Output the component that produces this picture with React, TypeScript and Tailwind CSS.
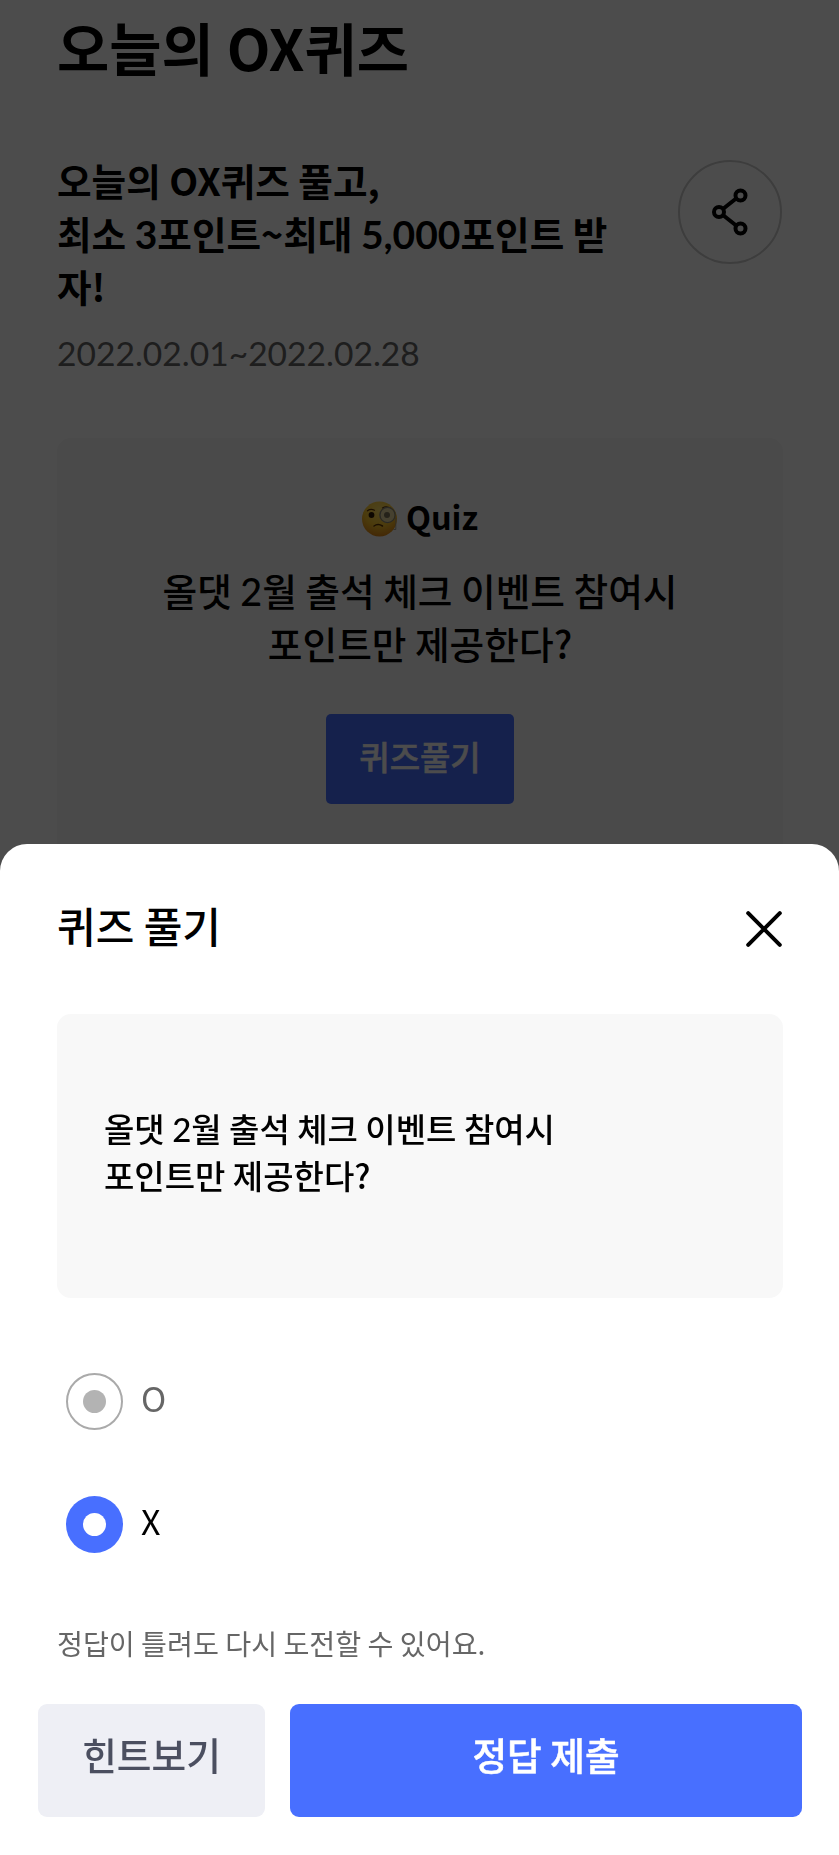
import { useState } from 'react'

const OPTIONS = ['O', 'X']

function ShareIcon() {
  return (
    <svg width="36" height="48" viewBox="0 0 36 48" fill="none" stroke="#000" strokeWidth="4">
      <path d="M11.5 20.5L23.5 11M11.5 27.5L23.5 37" />
      <circle cx="7" cy="24" r="5" />
      <circle cx="28.5" cy="7.5" r="5" />
      <circle cx="28.5" cy="40.5" r="5" />
    </svg>
  )
}

function MonocleFace() {
  return (
    <svg width="36" height="36" viewBox="0 0 36 36" fill="none">
      <defs>
        <radialGradient id="face" cx="0.5" cy="0.25" r="0.8">
          <stop offset="0" stopColor="#ffe168" />
          <stop offset="0.55" stopColor="#fbc52b" />
          <stop offset="1" stopColor="#dc7d12" />
        </radialGradient>
      </defs>
      <circle cx="17.5" cy="18" r="17.5" fill="url(#face)" />
      <path d="M5.5 9.8Q8.5 7.5 12.5 9.2" stroke="#5b3205" strokeWidth="1.2" strokeLinecap="round" />
      <path d="M20.5 7Q24.5 4.4 28.5 7.5" stroke="#5b3205" strokeWidth="1.2" strokeLinecap="round" />
      <ellipse cx="9.5" cy="14" rx="2.9" ry="3" fill="#2d1a04" />
      <circle cx="25.5" cy="14" r="7.6" fill="#e9d9a0" stroke="#8d8878" strokeWidth="1.4" />
      <circle cx="25" cy="14" r="3" fill="#7d7357" />
      <path d="M12 25Q16 22.2 20.5 25" stroke="#5b3205" strokeWidth="1.5" strokeLinecap="round" />
      <path d="M33.8 17V28.5H31.5" stroke="#a09a88" strokeWidth="0.9" />
    </svg>
  )
}

function CloseIcon() {
  return (
    <svg width="36" height="36" viewBox="0 0 36 36" stroke="#000" strokeWidth="4" strokeLinecap="round">
      <path d="M2.2 2.2L33.8 33.8M33.8 2.2L2.2 33.8" />
    </svg>
  )
}

function Radio({ checked }: { checked: boolean }) {
  return checked ? (
    <span className="flex size-[57px] items-center justify-center rounded-full bg-[#486fff]">
      <span className="size-[23px] rounded-full bg-white" />
    </span>
  ) : (
    <span className="flex size-[57px] items-center justify-center rounded-full border-2 border-[#aaa]">
      <span className="size-[23px] rounded-full bg-[#b3b3b3]" />
    </span>
  )
}

function QuizSheet() {
  const [answer, setAnswer] = useState('X')

  return (
    <section className="fixed inset-x-0 bottom-0 flex h-[1011px] flex-col rounded-t-[27px] bg-white pt-[53px]">
      <header className="flex h-[64px] items-center justify-between pr-[57px] pl-[57px]">
        <h2 className="pb-[8px] text-[42px] leading-[64px] font-medium">퀴즈 풀기</h2>
        <button type="button">
          <CloseIcon />
        </button>
      </header>

      <div className="mx-[57px] mt-[53px] h-[284px] w-[726px] rounded-[14px] bg-[#f8f8f8] px-[47px] pt-[91px]">
        <p className="text-[33px] leading-[47.3px] font-medium">
          올댓 <span className="font-[Lato] leading-none">2</span>월 출석 체크 이벤트 참여시
          <br />
          포인트만 제공한다?
        </p>
      </div>

      <div className="mt-[75px] ml-[66px] flex flex-col gap-[66px]">
        {OPTIONS.map((option) => (
          <button
            key={option}
            type="button"
            onClick={() => setAnswer(option)}
            className="flex h-[57px] items-center gap-[18px]"
          >
            <Radio checked={answer === option} />
            <span className={answer === option ? 'pb-[9px] text-[34px] text-black' : 'pb-[9px] text-[34px] text-[#666]'}>
              {option}
            </span>
          </button>
        ))}
      </div>

      <p className="mt-[68px] ml-[57px] text-[28.2px] leading-[44px] text-[#666]">정답이 틀려도 다시 도전할 수 있어요.</p>

      <div className="mt-[39px] ml-[38px] flex h-[113px] gap-[25px] text-[37.7px] font-medium">
        <button type="button" className="w-[227px] rounded-[9px] bg-[#eeeff5] pb-[13px] text-[#4b4f60]">
          힌트보기
        </button>
        <button
          type="button"
          className="w-[512px] rounded-[9px] bg-[#486fff] pb-[13px] text-white [-webkit-text-stroke:0.5px_white]"
        >
          정답 제출
        </button>
      </div>
    </section>
  )
}

export default function App() {
  return (
    <div className="h-[1855px] overflow-hidden bg-white font-['Noto_Sans_CJK_KR',sans-serif] text-black">
      <main className="px-[57px]">
        <h1 className="pt-[5px] text-[56.8px] leading-[82px] font-bold">오늘의 OX퀴즈</h1>

        <div className="mt-[68px] flex h-[283px] justify-between">
          <div>
            <p className="-mt-[2px] text-[37.6px] leading-[53px] font-bold whitespace-nowrap">
              오늘의 OX퀴즈 풀고,
              <br />
              최소 <span className="font-[Lato] text-[39px] leading-none">3</span>포인트~최대{' '}
              <span className="font-[Lato] text-[39px] leading-none">5,000</span>포인트 받
              <br />
              자!
            </p>
            <p className="mt-[16px] font-[Lato] text-[33.6px] leading-[50px] text-[#666]">2022.02.01~2022.02.28</p>
          </div>
          <button
            type="button"
            className="mt-[5px] flex size-[104px] shrink-0 items-center justify-center rounded-full border-2 border-[#ccc]"
          >
            <ShareIcon />
          </button>
        </div>

        <div className="flex h-[500px] w-[726px] flex-col items-center rounded-[14px] bg-[#f8f8f8] pt-[56px]">
          <div className="flex h-[50px] items-center gap-[8px]">
            <MonocleFace />
            <span className="pb-[7px] text-[32.5px] leading-[50px] font-bold">Quiz</span>
          </div>
          <p className="mt-[19px] text-center text-[37.7px] leading-[53px] font-medium">
            올댓 <span className="font-[Lato] leading-none">2</span>월 출석 체크 이벤트 참여시
            <br />
            포인트만 제공한다?
          </p>
          <button
            type="button"
            className="mt-[45px] h-[90px] w-[188px] rounded-[5px] bg-[#486fff] pb-[4px] text-[33px] font-medium text-white [-webkit-text-stroke:0.5px_white]"
          >
            퀴즈풀기
          </button>
        </div>
      </main>

      <div className="fixed inset-0 bg-black/70" />
      <QuizSheet />
    </div>
  )
}
